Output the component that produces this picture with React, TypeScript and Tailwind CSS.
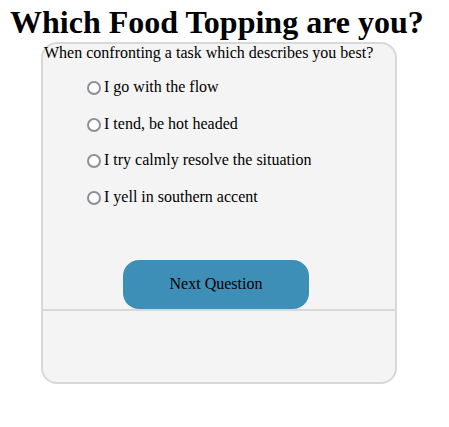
import React from "react";

const options = [
  "I go with the flow",
  "I tend, be hot headed",
  "I try calmly resolve the situation",
  "I yell in southern accent",
];

export default function App() {
  return (
    <div className="w-[449px] h-[427px] bg-white text-black font-['Liberation_Serif','Times_New_Roman',serif]">
      <h1 className="ml-[10px] mt-[4px] text-[32px] leading-[36px] font-bold">
        Which Food Topping are you?
      </h1>
      <div className="mt-[2px] ml-[41px] w-[356px] h-[342px] border-2 border-[#d8d8d8] rounded-[16px] bg-[#f4f4f4] flex flex-col">
        <p className="pl-[1px] text-[16px] leading-[18px]">
          When confronting a task which describes you best?
        </p>
        <div className="mt-[16px] ml-[40px] flex flex-col gap-[18.5px]">
          {options.map((o) => (
            <label key={o} className="flex items-start h-[18px] text-[16px] leading-[18px]">
              <span className="mt-[3px] ml-[4px] mr-[3px] w-[14px] h-[14px] rounded-full border-2 border-[#8f8f96] bg-white shrink-0" />
              <span>{o}</span>
            </label>
          ))}
        </div>
        <div className="mt-[54px] ml-[80px]">
          <button className="w-[186px] h-[49px] rounded-[16px] bg-[#3d8fb8] text-[16px] leading-[18px] text-black flex items-center justify-center">
            Next Question
          </button>
        </div>
        <div className="h-[2px] bg-[#d8d8d8]" />
      </div>
    </div>
  );
}
